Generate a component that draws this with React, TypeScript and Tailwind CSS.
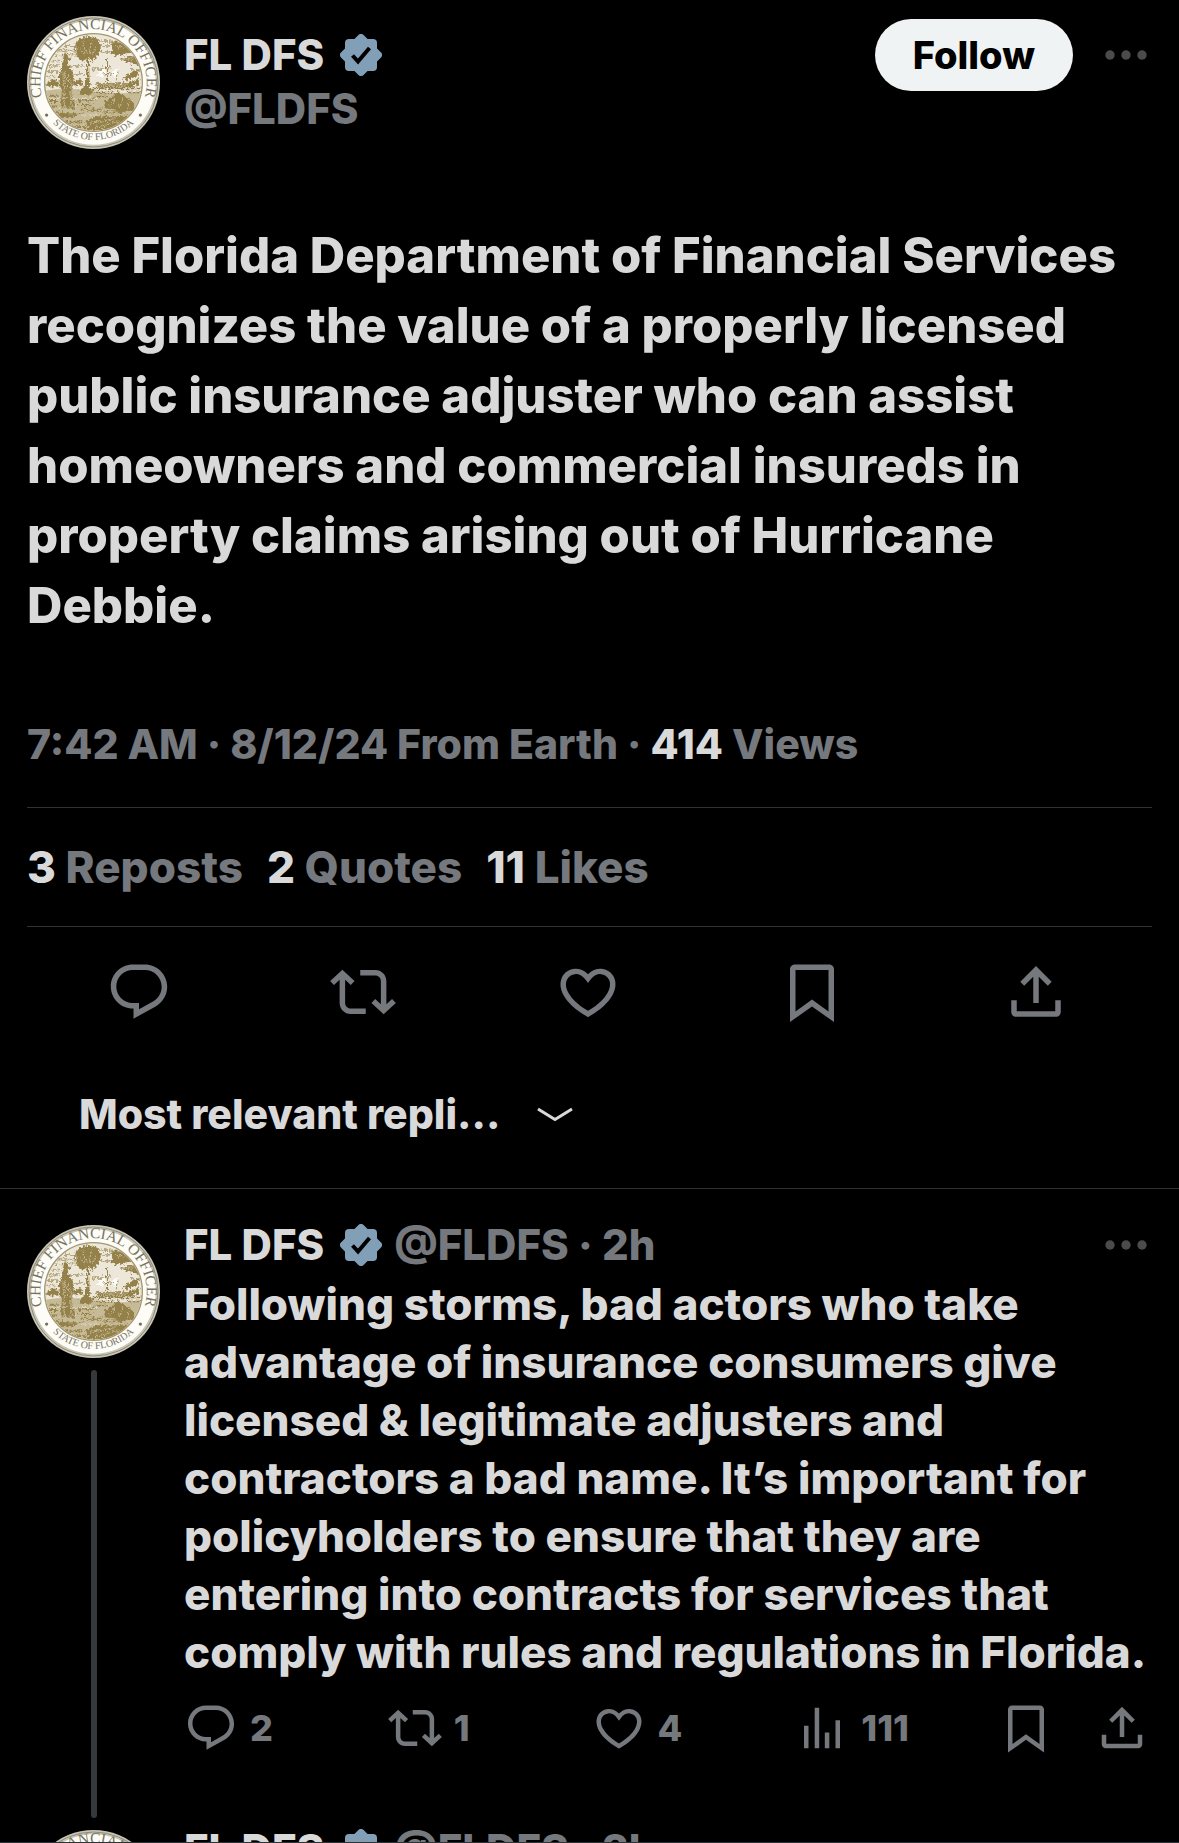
import type { ReactNode } from "react";

type IconProps = { className?: string };

const iconPaths = {
    reply: "M1.751 10c0-4.42 3.584-8 8.005-8h4.366c4.49 0 8.129 3.64 8.129 8.13 0 2.96-1.607 5.68-4.196 7.11l-8.054 4.46v-3.69h-.067c-4.49.1-8.183-3.51-8.183-8.01zm8.005-6c-3.317 0-6.005 2.69-6.005 6 0 3.37 2.77 6.08 6.138 6.01l.351-.01h1.761v2.3l5.087-2.81c1.951-1.08 3.163-3.13 3.163-5.36 0-3.39-2.744-6.13-6.129-6.13H9.756z",
    repost: "M4.5 3.88l4.432 4.14-1.364 1.46L5.5 7.55V16c0 1.1.896 2 2 2H13v2H7.5c-2.209 0-4-1.79-4-4V7.55L1.432 9.48.068 8.02 4.5 3.88zM16.5 6H11V4h5.5c2.209 0 4 1.79 4 4v8.45l2.068-1.93 1.364 1.46-4.432 4.14-4.432-4.14 1.364-1.46 2.068 1.93V8c0-1.1-.896-2-2-2z",
    like: "M16.697 5.5c-1.222-.06-2.679.51-3.89 2.16l-.805 1.09-.806-1.09C9.984 6.01 8.526 5.44 7.304 5.5c-1.243.07-2.349.78-2.91 1.91-.552 1.12-.633 2.78.479 4.82 1.074 1.97 3.257 4.27 7.129 6.61 3.87-2.34 6.052-4.64 7.126-6.61 1.111-2.04 1.03-3.7.477-4.82-.561-1.13-1.666-1.84-2.908-1.91zm4.187 7.69c-1.351 2.48-4.001 5.12-8.379 7.67l-.503.3-.504-.3c-4.379-2.55-7.029-5.19-8.382-7.67-1.36-2.5-1.41-4.86-.514-6.67.887-1.79 2.647-2.91 4.601-3.01 1.651-.09 3.368.56 4.798 2.01 1.429-1.45 3.146-2.1 4.796-2.01 1.954.1 3.714 1.22 4.601 3.01.896 1.81.846 4.17-.514 6.67z",
    views: "M8.75 21V3h2v18h-2zM18 21V8.5h2V21h-2zM4 21l.004-10h2L6 21H4zm9.248 0v-7h2v7h-2z",
    bookmark:
        "M4 3.75C4 2.784 4.784 2 5.75 2h12.5c.966 0 1.75.784 1.75 1.75v19.19l-8-5.71-8 5.71V3.75zM6 4v15.06l6-4.29 6 4.29V4H6z",
    share: "M12 2.59l5.7 5.7-1.41 1.42L13 6.41V16h-2V6.41l-3.3 3.3-1.41-1.42L12 2.59zM21 15v4.25c0 .966-.784 1.75-1.75 1.75H4.75C3.784 21 3 20.216 3 19.25V15h2v4h14v-4h2z",
};

type IconName = keyof typeof iconPaths;

function Icon({ name, className }: IconProps & { name: IconName }) {
    return (
        <svg viewBox="0 0 24 24" fill="currentColor" aria-hidden="true" className={className}>
            <path d={iconPaths[name]} />
        </svg>
    );
}

function VerifiedBadge() {
    return (
        <svg viewBox="-21 -21 42 42" className="size-[42px] shrink-0" role="img" aria-label="Verified account">
            <g fill="#829fb8">
                <rect x="-16" y="-16" width="32" height="32" rx="4" />
                <rect x="-16" y="-16" width="32" height="32" rx="4" transform="rotate(45)" />
            </g>
            <path d="M-8.5 .5L-3 6.5L8.5 -7" fill="none" stroke="#000" strokeWidth="4" />
        </svg>
    );
}

function MoreButton() {
    return (
        <button type="button" aria-label="More" className="flex w-[52px] shrink-0 justify-center text-[#4b4b4c]">
            <svg viewBox="0 0 42 10" fill="currentColor" className="h-[10px] w-[42px]">
                <circle cx="5" cy="5" r="4.7" />
                <circle cx="21" cy="5" r="4.7" />
                <circle cx="37" cy="5" r="4.7" />
            </svg>
        </button>
    );
}

/* State seal, the id keeps the clip, filter and text paths of each copy apart */
function Seal({ id }: { id: string }) {
    return (
        <svg viewBox="20 22 400 400" className="size-[133px] shrink-0" role="img" aria-label="FL DFS">
            <defs>
                <clipPath id={`${id}-scene`}>
                    <circle cx="220" cy="222" r="145" />
                </clipPath>
                <filter id={`${id}-rough`} x="-10%" y="-10%" width="120%" height="120%">
                    <feTurbulence type="fractalNoise" baseFrequency="0.12" numOctaves="3" seed="4" />
                    <feDisplacementMap in="SourceGraphic" scale="20" xChannelSelector="R" yChannelSelector="G" />
                </filter>
                <path id={`${id}-top`} d="M71 280A160 160 0 1 1 369 280" />
                <path id={`${id}-bottom`} d="M85 330A173 173 0 0 0 355 330" />
            </defs>
            <circle cx="220" cy="222" r="200" fill="#c9c5b5" />
            <circle cx="220" cy="222" r="194" fill="none" stroke="#8f8b78" strokeWidth="3" />
            <circle cx="220" cy="222" r="187" fill="#fdfcf7" />
            <circle cx="220" cy="222" r="147" fill="#ece7d8" stroke="#a39872" strokeWidth="4" />
            <g clipPath={`url(#${id}-scene)`}>
                <path d="M60 250Q140 232 220 248T380 244V380H60Z" fill="#c6bb96" />
                <g filter={`url(#${id}-rough)`} fill="#94804a" stroke="#94804a">
                    {/* sky */}
                    <path
                        d="M110 112H170M240 98H300M100 126H160M236 112H270M90 140H120M150 138H170M84 156H118M240 130H280M80 172H116M150 172H190M80 188H112M215 182H250M78 204H110M160 196H192M330 184H362"
                        fill="none"
                        stroke="#b5a880"
                        strokeWidth="5"
                    />
                    <path
                        d="M272 104Q300 94 330 118L344 132Q310 130 296 140L270 132Q290 124 272 104ZM302 150L352 144L358 168L326 162Z"
                        strokeWidth="3"
                    />
                    <path d="M225 205L262 165L250 205ZM268 200L300 170L285 205Z" fill="#fdfcf7" stroke="none" />
                    {/* water and steamboat */}
                    <path d="M216 240H366M226 252H290M320 252H366M220 264H260" fill="none" strokeWidth="5" />
                    <path d="M228 224H328L356 210V226L330 236H236Z" strokeWidth="1" />
                    <path d="M262 152V224M250 178H274M246 196H280M290 190V224M308 208L352 184L356 198L322 214Z" strokeWidth="3" />
                    {/* palm */}
                    <path d="M199 130L197 250H209L206 130Z" stroke="none" />
                    <path
                        d="M202 84Q230 82 240 104Q244 126 228 144L216 158L204 142L190 158Q166 146 166 118Q166 90 202 84Z"
                        strokeWidth="2"
                    />
                    <path d="M180 244Q200 226 218 246L212 258H176Z" strokeWidth="1" />
                    {/* hills on the left */}
                    <path d="M78 222Q96 208 114 218V234L78 232ZM160 220L184 212L186 228L160 230Z" strokeWidth="1" />
                    {/* figure */}
                    <path
                        d="M124 142L142 136L150 148L142 156L144 172Q158 184 160 210L154 248L162 300H118L126 252L116 212Q116 190 130 174Z"
                        strokeWidth="1"
                    />
                    {/* ground and bushes */}
                    <path d="M84 262H112M84 278H110M92 294H112M172 276H226M170 290H214M182 304H244" fill="none" strokeWidth="6" />
                    <path
                        d="M252 298Q254 272 276 270Q284 248 304 254Q314 262 326 272Q344 280 342 304L300 310Z"
                        strokeWidth="1"
                    />
                    <path
                        d="M104 308L150 316L188 312L150 328H122ZM196 342Q224 318 262 324L336 322L314 346L268 364H208Z"
                        strokeWidth="1"
                    />
                    <path d="M134 342H184M154 356H196M250 312H320" fill="none" strokeWidth="5" />
                </g>
                <g fill="none" stroke="#f6f2e6" strokeWidth="3" opacity="0.5" filter={`url(#${id}-rough)`}>
                    <path d="M132 190V296M142 200V240M152 210V290M188 98L198 136M214 96L208 132M230 112L214 138M176 116L192 140M206 346L286 330M224 358L296 340M268 294L284 272M298 298L310 268M322 298L328 282M286 112L318 120M306 152H346M240 230H330M90 270H240M110 300L180 290M180 320H240" />
                </g>
            </g>
            <g fill="#77735f" className="font-['Liberation_Serif',serif] font-normal">
                <text fontSize="46">
                    <textPath href={`#${id}-top`} startOffset="50%" textAnchor="middle">
                        CHIEF FINANCIAL OFFICER
                    </textPath>
                </text>
                <text fontSize="30">
                    <textPath href={`#${id}-bottom`} startOffset="50%" textAnchor="middle">
                        STATE OF FLORIDA
                    </textPath>
                </text>
                <circle cx="79" cy="320" r="5" />
                <circle cx="361" cy="320" r="5" />
            </g>
        </svg>
    );
}

function Count({ value, label }: { value: string; label: string }) {
    return (
        <a href="#">
            <span className="text-[#d9d9d9]">{value}</span> {label}
        </a>
    );
}

const postActions: { icon: IconName; label: string }[] = [
    { icon: "reply", label: "Reply" },
    { icon: "repost", label: "Repost" },
    { icon: "like", label: "Like" },
    { icon: "bookmark", label: "Bookmark" },
    { icon: "share", label: "Share" },
];

const replyActions: { icon: IconName; label: string; count: string }[] = [
    { icon: "reply", label: "Reply", count: "2" },
    { icon: "repost", label: "Repost", count: "1" },
    { icon: "like", label: "Like", count: "4" },
    { icon: "views", label: "Views", count: "111" },
];

function Post() {
    return (
        <article className="px-[27px] pt-4">
            <header className="flex items-start gap-6">
                <Seal id="post" />
                <div className="min-w-0 flex-1 pt-3 text-[42px] leading-[54px]">
                    <div className="flex items-center gap-4">
                        <a href="#">FL DFS</a>
                        <VerifiedBadge />
                    </div>
                    <p className="text-[#75787c]">@FLDFS</p>
                </div>
                <div className="flex items-center gap-[27px] pt-[3px]">
                    <button type="button" className="h-[72px] rounded-full bg-[#eff3f4] px-[38px] text-[38px] text-black">
                        Follow
                    </button>
                    <MoreButton />
                </div>
            </header>

            <p className="mt-18 text-[49px] leading-[70px]">
                The Florida Department of Financial Services recognizes the value of a properly licensed public
                insurance adjuster who can assist homeowners and commercial insureds in property claims arising out of
                Hurricane Debbie.
            </p>

            <p className="mt-19 border-b border-[#2f3336] pb-9 text-[41px] leading-[54px] text-[#75787c]">
                7:42 AM · 8/12/24 From Earth · <span className="text-[#d9d9d9]">414</span> Views
            </p>

            <div className="flex gap-6 border-b border-[#2f3336] py-8 text-[44px] leading-[54px] text-[#75787c]">
                <Count value="3" label="Reposts" />
                <Count value="2" label="Quotes" />
                <Count value="11" label="Likes" />
            </div>

            <div className="flex py-8 pr-1 text-[#75787c]">
                {postActions.map((action) => (
                    <div key={action.icon} className="flex flex-1 justify-center">
                        <button type="button" aria-label={action.label}>
                            <Icon name={action.icon} className="size-[66px]" />
                        </button>
                    </div>
                ))}
            </div>
        </article>
    );
}

function SortReplies() {
    return (
        <div className="border-b border-[#2f3336] px-[79px] pt-[30px] pb-[47px]">
            <label className="flex items-center gap-9">
                <select
                    aria-label="Sort replies"
                    className="appearance-none bg-transparent text-[41px] leading-[54px] text-[#d9d9d9]"
                >
                    <option>Most relevant repli...</option>
                </select>
                <svg viewBox="0 0 36 15" fill="none" stroke="#d9d9d9" strokeWidth="3" className="h-[15px] w-9">
                    <path d="M1 2L18 12.500L35 2" />
                </svg>
            </label>
        </div>
    );
}

function Reply({ id, children }: { id: string; children: ReactNode }) {
    return (
        <article className="flex gap-6">
            <div className="flex flex-col items-center gap-3">
                <Seal id={id} />
                <div className="w-1.5 flex-1 rounded-full bg-[#35393c]" />
            </div>
            <div className="min-w-0 flex-1 pb-[63px]">
                <header className="flex h-10 items-center text-[42px] leading-[40px]">
                    <a href="#">FL DFS</a>
                    <div className="ml-4">
                        <VerifiedBadge />
                    </div>
                    <p className="ml-3 flex-1 text-[#75787c]">@FLDFS · 2h</p>
                    <MoreButton />
                </header>
                <p className="mt-[10px] text-[44px] leading-[58px]">{children}</p>
                <div className="mt-5 flex pr-[3px] text-[#75787c]">
                    {replyActions.map((action) => (
                        <div key={action.icon} className="flex flex-1">
                            <button
                                type="button"
                                aria-label={action.label}
                                className="flex items-center gap-3 text-[36px] leading-[54px]"
                            >
                                <Icon name={action.icon} className="size-[54px]" />
                                {action.count}
                            </button>
                        </div>
                    ))}
                    <div className="flex gap-[42px]">
                        <button type="button" aria-label="Bookmark">
                            <Icon name="bookmark" className="size-[54px]" />
                        </button>
                        <button type="button" aria-label="Share">
                            <Icon name="share" className="size-[54px]" />
                        </button>
                    </div>
                </div>
            </div>
        </article>
    );
}

export default function App() {
    return (
        <main className="h-screen overflow-hidden border-b border-[#2f3336] bg-black font-['Inter',sans-serif] font-extrabold text-[#d9d9d9]">
            <Post />
            <SortReplies />
            <section className="flex flex-col gap-3 px-[27px] pt-9">
                <Reply id="reply-1">
                    Following storms, bad actors who take advantage of insurance consumers give licensed &amp;
                    legitimate adjusters and contractors a bad name. It’s important for policyholders to ensure that
                    they are entering into contracts for services that comply with rules and regulations in Florida.
                </Reply>
                <Reply id="reply-2">{null}</Reply>
            </section>
        </main>
    );
}
